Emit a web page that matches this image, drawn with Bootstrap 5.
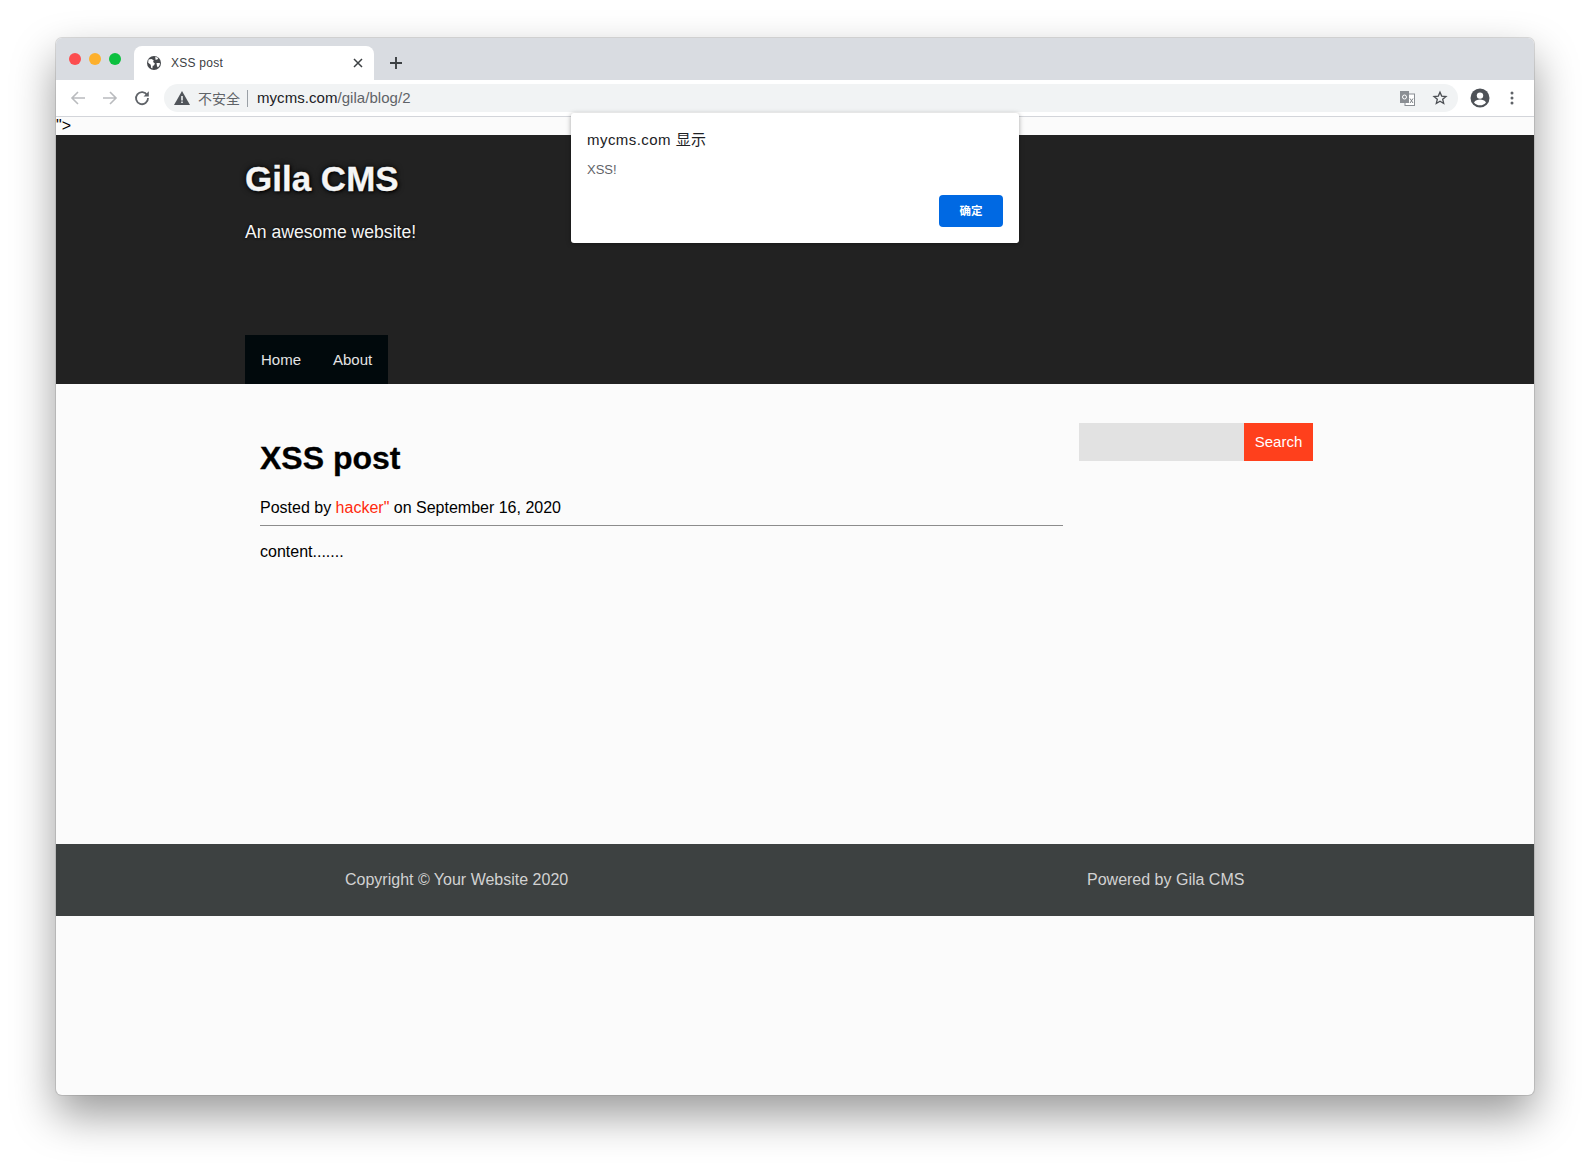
<!DOCTYPE html>
<html lang="zh">
<head>
    <meta charset="UTF-8">
    <meta name="viewport" content="width=device-width, initial-scale=1.0">
    <title>XSS post</title>
    <link rel="stylesheet" href="https://cdn.jsdelivr.net/npm/bootstrap@5.3.3/dist/css/bootstrap.min.css">
    <style>
        html, body { height: 100%; }
        body { background: #fff; font-family: "Liberation Sans", Arial, sans-serif; overflow: hidden; padding: 38px 56px 74px 56px; color: #000; }
        .app-window { position: relative; height: 1057px; border-radius: 6px; background: #fbfbfb; box-shadow: 0 0 0 1px rgba(120,120,120,.25), 0 20px 44px 0 rgba(0,0,0,.4); }
        .tab-strip { height: 42px; background: #d9dce1; border-radius: 6px 6px 0 0; padding-left: 78px; }
        .traffic { left: 13px; top: 15px; gap: 8px; }
        .traffic i { display: block; width: 12px; height: 12px; border-radius: 50%; }
        .dot-red { background: #fc4d4f; }
        .dot-amber { background: #fdb02c; }
        .dot-green { background: #0cc03f; }
        .chrome-tab { width: 240px; height: 34px; margin-top: 8px; background: #fff; border-radius: 8px 8px 0 0; padding: 0 11px 0 12px; font-size: 12px; color: #3c4043; letter-spacing: .25px; }
        .tab-globe { margin-right: 9px; }
        .new-tab { margin-left: 5px; margin-top: 8px; }
        .tool-bar { height: 36px; background: #fff; border-bottom: 1px solid #d3d5da; padding: 0 14px; box-sizing: content-box; }
        .nav-gap { margin-left: 16px; }
        .omni { width: 1294px; height: 28px; margin-left: 14px; background: #f1f3f4; border-radius: 14px; padding: 0 10px 0 10px; font-size: 15px; color: #202124; }
        .omni-warn { color: #5f6368; font-size: 14px; font-family: "Noto Sans CJK SC", sans-serif; margin-left: 8px; }
        .omni-sep { width: 1px; height: 17px; background: #9aa0a6; margin: 0 9px 0 7px; }
        .omni-url { letter-spacing: .05px; }
        .omni-url span { color: #5f6368; }
        .star-icon { margin-left: 17px; }
        .acct-icon { margin-left: 12px; }
        .menu-icon { margin-left: 20px; }
        .stray-text { height: 18px; font-size: 16px; line-height: 18px; background: #fbfbfb; color: #000; white-space: nowrap; }
        .site-head { height: 249px; background: #222; padding-left: 189px; }
        .site-title { margin: 0; padding-top: 23px; height: 72px; font-size: 35px; line-height: 42px; font-weight: 700; color: #f5f5f5; text-shadow: 0 0 6px #000, 1px 1px 3px #000; -webkit-text-stroke: .3px #f5f5f5; }
        .site-tag { margin: 0; padding-top: 14px; font-size: 17.6px; line-height: 22px; color: #f5f5f5; text-shadow: 0 0 3px #000; }
        .site-nav { width: 143px; height: 49px; margin-top: 92px; background: #01090c; }
        .site-nav a { padding: 0 16px; line-height: 49px; font-size: 15px; color: #e4e4e4; text-decoration: none; }
        .page-main { height: 460px; padding: 39px 0 0 204px; }
        .post-col { width: 803px; }
        .post-title { margin: 0; padding-top: 17px; font-size: 32px; line-height: 36px; font-weight: 700; color: #000; -webkit-text-stroke: .3px #000; }
        .post-meta { margin: 0; padding: 22px 0 7px; font-size: 16px; line-height: 20px; border-bottom: 1px solid #8c8c8c; }
        .post-meta a { color: #ff2a0d; text-decoration: none; }
        .post-text { margin: 0; padding-top: 16px; font-size: 16px; line-height: 20px; }
        .side-col { margin-left: 16px; }
        .search-input { width: 165px; height: 38px; background: #e2e2e2; border: 0; border-radius: 0; }
        .search-btn { width: 69px; height: 38px; padding: 0; background: #ff401c; color: #fff; border: 0; border-radius: 0; font-size: 15px; }
        .site-foot { height: 72px; background: #3d4141; color: #d2d2d2; font-size: 16px; }
        .foot-left { margin-left: 289px; width: 742px; }
        .alert-box { position: absolute; left: 515px; top: 75px; width: 448px; height: 130px; background: #fff; border-radius: 3px; box-shadow: 0 1px 5px rgba(0,0,0,.35); padding: 17px 16px 16px; }
        .alert-title { font-size: 15px; line-height: 20px; color: #202124; font-family: "Liberation Sans", "Noto Sans CJK SC", sans-serif; letter-spacing: .45px; }
        .alert-msg { margin-top: 11px; font-size: 13px; line-height: 18px; color: #5f6368; }
        .alert-btn { position: absolute; right: 16px; bottom: 16px; width: 64px; height: 32px; padding: 0; background: #0069e3; color: #fff; border: 0; border-radius: 4px; font-size: 11.5px; font-weight: 700; font-family: "Noto Sans CJK SC", sans-serif; }
    </style>
</head>
<body>
    <div class="app-window">
        <div class="tab-strip d-flex position-relative">
            <div class="traffic position-absolute d-flex"><i class="dot-red"></i><i class="dot-amber"></i><i class="dot-green"></i></div>
            <div class="chrome-tab d-flex align-items-center">
                <svg width="16" height="16" viewBox="0 0 16 16" class="tab-globe flex-shrink-0"><circle cx="8" cy="8" r="7" fill="#45484c"/><path d="M2.500 4.500l3-.5 2.200 1.200-.6 1.800 1.800 1.500-.9 1.900-1.300.4-.3 2.700-1.300-.8-.4-3-2.500-2zM9.300 1.800l3 1.200-1 1.500-1.800.3zM10.500 8h3.400l-.2 2-1.700 2.500-1-1.200z" fill="#fff"/></svg>
                <span class="flex-grow-1">XSS post</span>
                <svg width="10" height="10" viewBox="0 0 10 10"><path d="M1 1l8 8M9 1l-8 8" stroke="#3c4043" stroke-width="1.500"/></svg>
            </div>
            <svg class="new-tab" width="34" height="34" viewBox="0 0 34 34"><path d="M17 11v12M11 17h12" stroke="#3c4043" stroke-width="1.900"/></svg>
        </div>
        <div class="tool-bar d-flex align-items-center">
            <svg width="16" height="16" viewBox="0 0 16 16" class="flex-shrink-0"><path d="M15 8H2M8 2L2 8l6 6" fill="none" stroke="#b9bbbe" stroke-width="1.600"/></svg>
            <svg width="16" height="16" viewBox="0 0 16 16" class="nav-gap flex-shrink-0"><path d="M1 8h13M8 2l6 6-6 6" fill="none" stroke="#b9bbbe" stroke-width="1.600"/></svg>
            <svg width="16" height="16" viewBox="0 0 16 16" class="nav-gap flex-shrink-0"><path d="M13.200 5.200A6 6 0 1 0 14 8" fill="none" stroke="#5f6368" stroke-width="1.800"/><path d="M9.600 6.400h5.200V1.200z" fill="#5f6368"/></svg>
            <div class="omni d-flex align-items-center flex-shrink-0">
                <svg width="16" height="14" viewBox="0 0 16 14" class="flex-shrink-0"><path d="M8 0l8 14H0z" fill="#50545a"/><path d="M7.200 5h1.600v4.400H7.200zM7.200 10.400h1.600V12H7.200z" fill="#f1f3f4"/></svg>
                <span class="omni-warn">不安全</span>
                <i class="omni-sep"></i>
                <span class="omni-url flex-grow-1">mycms.com<span>/gila/blog/2</span></span>
                <svg width="15" height="15" viewBox="0 0 15 15" class="flex-shrink-0"><rect x="5" y="3" width="9.500" height="11.500" fill="#fff" stroke="#8a8e93"/><rect x="0" y="0" width="9" height="12" fill="#8a8e93"/><circle cx="4.500" cy="6" r="2" fill="none" stroke="#fff"/><path d="M10 7.500l3 4.500M13 7.500l-3 4.500" stroke="#7b7f84"/></svg>
                <svg width="16" height="16" viewBox="0 0 16 16" class="star-icon flex-shrink-0"><path d="M8 2.200l1.700 3.900 4.300.4-3.300 2.800 1 4.200L8 11.300l-3.700 2.200 1-4.200L2 6.500l4.300-.4z" fill="none" stroke="#4a4d52" stroke-width="1.300"/></svg>
            </div>
            <svg width="20" height="20" viewBox="0 0 20 20" class="acct-icon flex-shrink-0"><circle cx="10" cy="10" r="9.500" fill="#4e5257"/><circle cx="10" cy="7.600" r="3.200" fill="#fff"/><path d="M4 14.400c1.300-2 3.600-2.800 6-2.800s4.700.8 6 2.800c-1.400 1.800-3.600 2.900-6 2.900s-4.600-1.100-6-2.900z" fill="#fff"/></svg>
            <svg width="4" height="14" viewBox="0 0 4 14" class="menu-icon flex-shrink-0"><circle cx="2" cy="2" r="1.500" fill="#5f6368"/><circle cx="2" cy="7" r="1.500" fill="#5f6368"/><circle cx="2" cy="12" r="1.500" fill="#5f6368"/></svg>
        </div>
        <div class="stray-text">"&gt;</div>
        <header class="site-head">
            <h1 class="site-title">Gila CMS</h1>
            <p class="site-tag">An awesome website!</p>
            <nav class="site-nav d-flex"><a href="#">Home</a><a href="#">About</a></nav>
        </header>
        <main class="page-main d-flex">
            <article class="post-col">
                <h2 class="post-title">XSS post</h2>
                <p class="post-meta">Posted by <a href="#">hacker"</a> on September 16, 2020</p>
                <p class="post-text">content.......</p>
            </article>
            <aside class="side-col d-flex align-items-start">
                <input class="search-input form-control" type="text">
                <button class="search-btn btn">Search</button>
            </aside>
        </main>
        <footer class="site-foot d-flex align-items-center">
            <div class="foot-left">Copyright © Your Website 2020</div>
            <div>Powered by Gila CMS</div>
        </footer>
        <div class="alert-box">
            <div class="alert-title">mycms.com 显示</div>
            <div class="alert-msg">XSS!</div>
            <button class="alert-btn btn">确定</button>
        </div>
    </div>
</body>
</html>
